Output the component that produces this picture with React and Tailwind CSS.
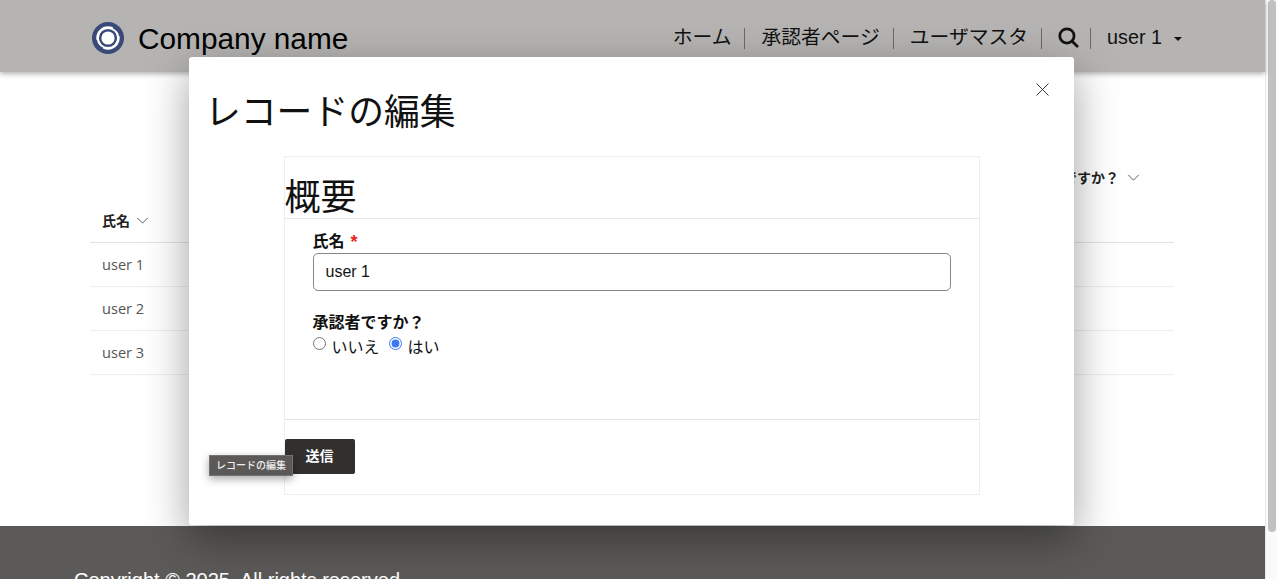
import React from "react";

const sans = "font-['Helvetica','Liberation_Sans','Noto_Sans_CJK_JP',sans-serif]";

function Chevron({ className }) {
  return (
    <svg viewBox="0 0 14 8" className={className} fill="none" stroke="#333" strokeWidth="0.9">
      <path d="M1 1l6 6 6-6" />
    </svg>
  );
}

function Logo() {
  return (
    <svg viewBox="0 0 32 32" className="w-[32px] h-[32px] mt-[4px]">
      <circle cx="16" cy="16" r="16" fill="#3a4a78" />
      <circle cx="16" cy="16" r="10.4" fill="none" stroke="#fff" strokeWidth="2.6" />
      <circle cx="16" cy="16" r="6.6" fill="#fff" />
      <path d="M21 5.5C26 8 27.6 11.5 27.6 14" fill="none" stroke="#3a4a78" strokeWidth="1.4" />
      <path d="M11 26.5C6 24 4.4 20.5 4.4 18" fill="none" stroke="#3a4a78" strokeWidth="1.4" />
    </svg>
  );
}

function Divider() {
  return <span className="block w-px h-[21px] bg-[#6b6a67]" />;
}

export default function App() {
  return (
    <div className={`flex h-[579px] w-full overflow-hidden bg-white ${sans}`}>
      <div className="relative flex-1 min-w-0 flex flex-col">
        <header className="h-[72px] shrink-0 bg-[#b5b4b2] shadow-[0_2px_5px_rgba(0,0,0,0.3)] flex items-center pl-[92px] pr-[83px] relative z-10">
          <Logo />
          <span className="ml-[14px] text-[29.8px] leading-none text-black mt-[6px]">Company name</span>
          <nav className="ml-auto flex items-center text-[19.8px] text-[#111] mt-[4px]">
            <span>ホーム</span>
            <span className="ml-[13px] mr-[16px]"><Divider /></span>
            <span>承認者ページ</span>
            <span className="ml-[13px] mr-[16px]"><Divider /></span>
            <span>ユーザマスタ</span>
            <span className="ml-[13px] mr-[16px]"><Divider /></span>
            <svg viewBox="0 0 20 20" className="w-[21px] h-[21px] -mt-[1px]" fill="none" stroke="#111" strokeWidth="2.6">
              <circle cx="8.5" cy="8.5" r="6.8" />
              <path d="M13.5 13.5L19 19" />
            </svg>
            <span className="ml-[11px] mr-[16px]"><Divider /></span>
            <span>user 1</span>
            <span className="ml-[12px] mt-[1px] w-0 h-0 border-x-[4px] border-x-transparent border-t-[4px] border-t-[#111]" />
          </nav>
        </header>

        <main className="flex-1 pl-[90px] pr-[91px] pt-[93px] font-['Open_Sans',sans-serif] text-[14.6px] text-[#555]">
          <div className="h-[24px] flex items-center justify-end pr-[34px] font-bold text-[14px] text-[#222] font-['Noto_Sans_CJK_JP',sans-serif]">
            <span>承認者ですか？</span>
            <Chevron className="w-[13px] h-[7px] ml-[8px]" />
          </div>
          <div className="mt-[17px] h-[37px] border-b border-[#e3e3e3] flex items-start pl-[12px] pt-[4px] font-bold text-[14px] leading-[20px] text-[#222] font-['Noto_Sans_CJK_JP',sans-serif]">
            <span>氏名</span>
            <Chevron className="w-[13px] h-[7px] ml-[6px] mt-[7px]" />
          </div>
          {["user 1", "user 2", "user 3"].map((u) => (
            <div key={u} className="h-[44px] border-b border-[#eeeeee] flex items-center pl-[12px]">{u}</div>
          ))}
        </main>

        <footer className="h-[53px] shrink-0 bg-[#5b5a58] pl-[74px] pt-[44px] text-[20px] leading-[20px] text-white whitespace-nowrap">
          Copyright © 2025. All rights reserved.
        </footer>

        <div className="absolute left-[189px] top-[57px] w-[885px] h-[468px] bg-white rounded-[3px] shadow-[0_14px_44px_rgba(0,0,0,0.38)] z-20 flex flex-col pt-[31px] items-center">
          <button className="absolute right-[25px] top-[26px]" aria-label="close">
            <svg viewBox="0 0 13 13" className="w-[13px] h-[13px]" fill="none" stroke="#222" strokeWidth="0.9">
              <path d="M.5.5l12 12M12.5.5l-12 12" />
            </svg>
          </button>
          <h2 className="self-start ml-[16px] text-[35.8px] leading-[50px] text-[#111] font-normal">レコードの編集</h2>
          <section className="mt-[18px] w-[696px] h-[339px] border border-[#eeeeee] flex flex-col">
            <h3 className="h-[62px] border-b border-[#e6e6e6] text-[36px] leading-[82px] text-[#111] font-normal">概要</h3>
            <div className="h-[201px] border-b border-[#e3e3e3] px-[28px] pt-[12px]">
              <label className="flex items-center h-[22px] text-[16px] leading-[22px] font-bold text-[#111]">
                氏名 <span className="ml-[6px] text-[#e8281c] text-[18px]">*</span>
              </label>
              <div className="h-[38px] w-[638px] border border-[#888888] rounded-[5px] flex items-center pl-[12px] text-[16px] text-[#111]">user 1</div>
              <div className="mt-[21px] h-[22px] text-[16px] leading-[22px] font-bold text-[#111]">承認者ですか？</div>
              <div className="flex items-center h-[24px] text-[16px] leading-[24px] text-[#111] pt-[3px]">
                <input type="radio" name="approver" readOnly className="appearance-auto w-[13px] h-[13px] m-0 -mt-[8px]" />
                <span className="ml-[6px]">いいえ</span>
                <input type="radio" name="approver" readOnly defaultChecked className="appearance-auto accent-[#3b78f6] w-[13px] h-[13px] m-0 ml-[9px] -mt-[8px]" />
                <span className="ml-[6px]">はい</span>
              </div>
            </div>
            <div className="pt-[19px]">
              <button className="w-[70px] h-[35px] bg-[#32302f] rounded-[2px] text-white text-[14px] font-bold">送信</button>
            </div>
          </section>
          <div className="absolute left-[20px] top-[398px] w-[84px] h-[21px] bg-[#5a5958] border border-[#737271] shadow-[0_3px_8px_rgba(0,0,0,0.35)] flex items-center justify-center text-[10px] font-medium text-[#eeeeee] whitespace-nowrap">
            レコードの編集
          </div>
        </div>
      </div>

      <div className="w-[12px] shrink-0 bg-[#fafafa] border-l border-[#e8e8e8] pl-[2px] pr-[1px]">
        <div className="h-[532px] bg-[#c1c1c1] rounded-b-[4px] rounded-t-[4px]" />
      </div>
    </div>
  );
}
